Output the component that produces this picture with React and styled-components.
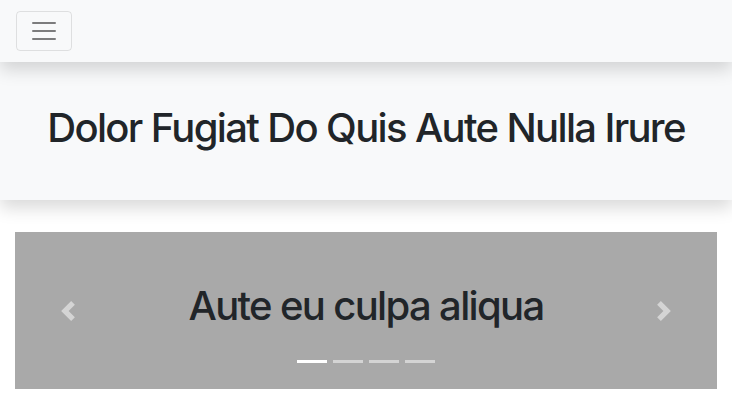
import React from 'react';
import styled, { createGlobalStyle } from 'styled-components';

const GlobalStyle = createGlobalStyle`
  * { box-sizing: border-box; }
  body {
    margin: 0;
    background: #fff;
    color: #212529;
    font-family: Inter, "Noto Sans", sans-serif;
  }
`;

const Navbar = styled.nav`
  display: flex;
  align-items: center;
  height: 62px;
  padding: 0 16px;
  background: #f8f9fa;
  box-shadow: 0 8px 16px rgba(0, 0, 0, 0.15);
  position: relative;
  z-index: 2;
`;

const Toggler = styled.button`
  display: flex;
  align-items: center;
  justify-content: center;
  width: 56px;
  height: 40px;
  padding: 4px 12px;
  background: transparent;
  border: 1px solid rgba(0, 0, 0, 0.1);
  border-radius: 4px;
  cursor: pointer;
`;

const Hero = styled.header`
  background: #f8f9fa;
  padding: 42px 16px 48px;
  box-shadow: 0 8px 16px rgba(0, 0, 0, 0.15);
  position: relative;
  z-index: 1;
`;

const Title = styled.h1`
  margin: 0;
  font-size: 40px;
  font-weight: 500;
  line-height: 1.2;
  letter-spacing: -1.65px;
  text-align: center;
  color: #212529;
`;

const Container = styled.main`
  padding: 32px 15px 0;
`;

const Carousel = styled.div`
  position: relative;
  background: #a9a9a9;
  padding: 50px 0 59px;
`;

const Control = styled.a`
  position: absolute;
  top: 0;
  bottom: 0;
  ${(p) => (p.$side === 'left' ? 'left: 0;' : 'right: 0;')}
  width: 15%;
  display: flex;
  align-items: center;
  justify-content: center;
  opacity: 0.5;
  cursor: pointer;
`;

const Indicators = styled.ol`
  position: absolute;
  left: 15%;
  right: 15%;
  bottom: 0;
  margin: 0 0 16px;
  padding: 0;
  list-style: none;
  display: flex;
  justify-content: center;
`;

const Indicator = styled.li`
  width: 30px;
  height: 3px;
  margin: 10px 3px;
  background: #fff;
  opacity: ${(p) => (p.$active ? 1 : 0.5)};
`;

const ArrowIcon = ({ dir }) => (
  <svg width="20" height="20" viewBox="0 0 8 8" fill="#fff">
    {dir === 'prev' ? (
      <path d="M5.25 0l-4 4 4 4 1.5-1.5L4.25 4l2.5-2.5L5.25 0z" />
    ) : (
      <path d="M2.75 0l-1.5 1.5L3.75 4l-2.5 2.5L2.75 8l4-4-4-4z" />
    )}
  </svg>
);

const TogglerIcon = () => (
  <svg width="30" height="30" viewBox="0 0 30 30">
    <path
      stroke="rgba(0,0,0,0.5)"
      strokeWidth="2"
      strokeLinecap="round"
      strokeMiterlimit="10"
      d="M4 7h22M4 15h22M4 23h22"
    />
  </svg>
);

export default function App() {
  return (
    <>
      <GlobalStyle />
      <Navbar>
        <Toggler aria-label="Toggle navigation">
          <TogglerIcon />
        </Toggler>
      </Navbar>
      <Hero>
        <Title>Dolor Fugiat Do Quis Aute Nulla Irure</Title>
      </Hero>
      <Container>
        <Carousel>
          <Title>Aute eu culpa aliqua</Title>
          <Control $side="left">
            <ArrowIcon dir="prev" />
          </Control>
          <Control $side="right">
            <ArrowIcon dir="next" />
          </Control>
          <Indicators>
            {[0, 1, 2, 3].map((i) => (
              <Indicator key={i} $active={i === 0} />
            ))}
          </Indicators>
        </Carousel>
      </Container>
    </>
  );
}
